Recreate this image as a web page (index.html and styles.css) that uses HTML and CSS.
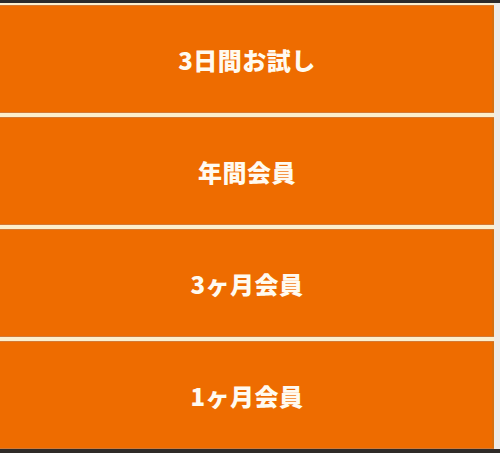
FILE: index.html
```html
<!DOCTYPE html>
<html lang="ja">
<head>
<meta charset="utf-8">
<link rel="stylesheet" href="styles.css">
</head>
<body>
<div class="topbar"></div>
<div class="menu">
  <a class="plan">3日間お試し</a>
  <a class="plan">年間会員</a>
  <a class="plan">3ヶ月会員</a>
  <a class="plan">1ヶ月会員</a>
</div>
<div class="bottombar"></div>
</body>
</html>
```
FILE: styles.css
```css
html, body {
  margin: 0;
  padding: 0;
}
body {
  width: 500px;
  height: 453px;
  overflow: hidden;
  background: #ededeb;
  font-family: "Noto Sans CJK JP", "Noto Sans", sans-serif;
}
.topbar {
  height: 3px;
  background: #2b2b2b;
}
.menu {
  width: 494px;
  background: #fcefcc;
  padding-top: 2px;
  display: flex;
  flex-direction: column;
  gap: 4px;
}
.plan {
  height: 108px;
  display: flex;
  align-items: center;
  justify-content: center;
  background: #ee6c00;
  box-shadow: inset 0 1px 0 #d27a36, inset 0 -1px 0 #d27a36, inset -2px 0 0 #d8700e;
  color: #fffaf0;
  font-size: 24px;
  font-weight: 900;
  letter-spacing: 0.5px;
  text-decoration: none;
}
.bottombar {
  height: 4px;
  background: #2e2a28;
}
```
